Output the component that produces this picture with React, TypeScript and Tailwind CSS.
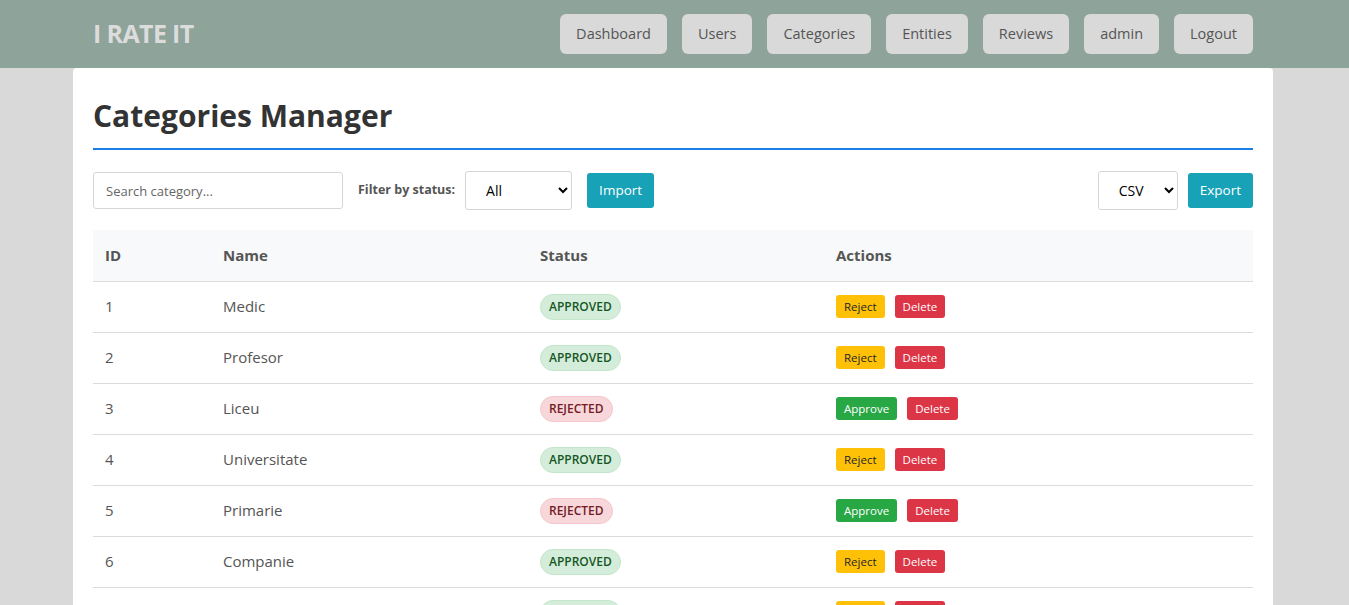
import React from "react";

const rows = [
  { id: 1, name: "Medic", status: "APPROVED" },
  { id: 2, name: "Profesor", status: "APPROVED" },
  { id: 3, name: "Liceu", status: "REJECTED" },
  { id: 4, name: "Universitate", status: "APPROVED" },
  { id: 5, name: "Primarie", status: "REJECTED" },
  { id: 6, name: "Companie", status: "APPROVED" },
  { id: 7, name: "Restaurant", status: "APPROVED" },
];

const nav = ["Dashboard", "Users", "Categories", "Entities", "Reviews", "admin", "Logout"];

export default function App() {
  return (
    <div className="h-[605px] overflow-hidden bg-[#d9d9d9] text-[#555]" style={{ fontFamily: '"Open Sans", "Noto Sans", sans-serif' }}>
      <header className="h-[68px] bg-[#8ea39a]">
        <div className="ml-[73px] flex h-full w-[1200px] items-center justify-between px-5">
          <div className="text-[25px] font-bold tracking-tight text-[#dcdcdc]">I RATE IT</div>
          <nav className="mb-[1px] flex gap-[15px]">
            {nav.map((n) => (
              <button key={n} className="h-10 rounded-md bg-[#d9d9d9] px-4 text-[14.5px] text-[#555]">
                {n}
              </button>
            ))}
          </nav>
        </div>
      </header>
      <main className="ml-[73px] w-[1200px] rounded-t-[4px] bg-white px-5 pt-[25px] pb-5">
        <h1 className="border-b-2 border-[#1a7ee6] pb-[9px] text-[30px] font-bold leading-[46px] text-[#333]">
          Categories Manager
        </h1>
        <div className="mt-[21px] flex items-center">
          <input
            placeholder="Search category..."
            className="h-[37px] w-[250px] rounded-[3px] border border-[#d6d6d6] px-3 text-[13px] placeholder:text-[#666]"
          />
          <label className="ml-[15px] text-[12.5px] font-bold text-[#555]">Filter by status:</label>
          <select className="ml-[10px] h-[39px] w-[107px] rounded-[3px] border border-[#d6d6d6] bg-white px-4 text-[14px] text-black">
            <option>All</option>
          </select>
          <button className="ml-[15px] h-[35px] rounded-[3px] bg-[#17a2b8] px-3 text-[13.5px] text-white">Import</button>
          <div className="flex-1" />
          <select className="h-[39px] w-[80px] rounded-[3px] border border-[#d6d6d6] bg-white px-4 text-[14px] text-black">
            <option>CSV</option>
          </select>
          <button className="ml-[10px] h-[35px] rounded-[3px] bg-[#17a2b8] px-3 text-[13.5px] text-white">Export</button>
        </div>
        <table className="mt-[20px] w-full border-collapse text-left text-[15px]">
          <thead>
            <tr className="h-[51px] border-b border-[#dcdcdc] bg-[#f8f9fa]">
              <th className="w-[118px] pl-3 font-bold">ID</th>
              <th className="w-[317px] pl-3 font-bold">Name</th>
              <th className="w-[296px] pl-3 font-bold">Status</th>
              <th className="pl-3 font-bold">Actions</th>
            </tr>
          </thead>
          <tbody>
            {rows.map((r) => (
              <tr key={r.id} className="h-[51px] border-b border-[#dcdcdc]">
                <td className="pl-3">{r.id}</td>
                <td className="pl-3">{r.name}</td>
                <td className="pl-3">
                  {r.status === "APPROVED" ? (
                    <span className="inline-block rounded-full border border-[#c3e6cb] bg-[#d4edda] px-2 py-[3px] text-[12px] font-semibold text-[#155724]">
                      APPROVED
                    </span>
                  ) : (
                    <span className="inline-block rounded-full border border-[#f5c6cb] bg-[#f8d7da] px-2 py-[3px] text-[12px] font-semibold text-[#721c24]">
                      REJECTED
                    </span>
                  )}
                </td>
                <td className="pl-3">
                  <div className="flex gap-[10px]">
                    {r.status === "APPROVED" ? (
                      <button className="h-[23px] rounded-[3px] bg-[#ffc107] px-2 text-[11.5px] text-[#212529]">Reject</button>
                    ) : (
                      <button className="h-[23px] rounded-[3px] bg-[#28a745] px-2 text-[11.5px] text-white">Approve</button>
                    )}
                    <button className="h-[23px] rounded-[3px] bg-[#dc3545] px-2 text-[11.5px] text-white">Delete</button>
                  </div>
                </td>
              </tr>
            ))}
          </tbody>
        </table>
      </main>
    </div>
  );
}
